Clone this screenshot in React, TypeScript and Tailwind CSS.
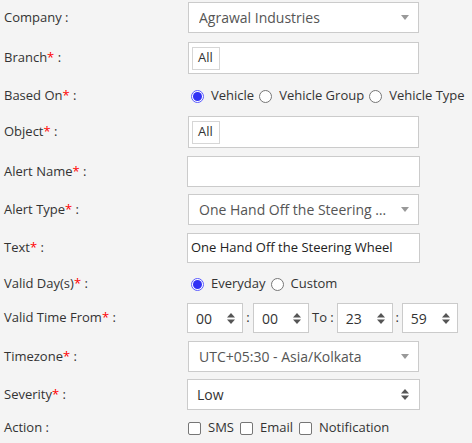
import React from "react";

const Req = () => <span className="text-[#ff0000]">*</span>;

function Label({ text, req }: { text: string; req?: boolean }) {
  return (
    <div className="w-[187px] shrink-0 pl-[4px] text-[13px] text-[#333]">
      {text}
      {req && <Req />} :
    </div>
  );
}

const Caret = () => (
  <svg width="8" height="5" viewBox="0 0 8 5" className="shrink-0">
    <path d="M0 0 L8 0 L4 5 Z" fill="#999" />
  </svg>
);

const Spinner = () => (
  <svg width="8" height="11" viewBox="0 0 8 11" className="shrink-0">
    <path d="M0 4.5 L8 4.5 L4 0 Z" fill="#555" />
    <path d="M0 6.5 L8 6.5 L4 11 Z" fill="#555" />
  </svg>
);

function Radio({ checked, className = "" }: { checked?: boolean; className?: string }) {
  return checked ? (
    <span className={"w-[13px] h-[13px] rounded-full border border-[#5a5aff] bg-white flex items-center justify-center shrink-0 " + className}>
      <span className="w-[9px] h-[9px] rounded-full bg-[#3131f5]" />
    </span>
  ) : (
    <span className={"block w-[13px] h-[13px] rounded-full border border-[#767676] bg-white shrink-0 " + className} />
  );
}

const Check = ({ className = "" }: { className?: string }) => (
  <span className={"block w-[13px] h-[13px] rounded-[2px] border border-[#767676] bg-white shrink-0 " + className} />
);

function SelectBox({ text }: { text: string }) {
  return (
    <div className="ml-[1px] w-[231px] h-[31px] bg-white border border-[#cbcbcb] flex items-center pl-[10px] pr-[9px]">
      <span className="flex-1 text-[14px] text-[#555] whitespace-nowrap overflow-hidden">{text}</span>
      <Caret />
    </div>
  );
}

function TagBox() {
  return (
    <div className="ml-[1px] w-[231px] h-[32px] bg-white border border-[#cbcbcb] flex items-center pl-[3px]">
      <span className="h-[23px] w-[28px] border border-[#d6d6d6] text-[13px] text-[#333] flex items-center pl-[5px]">All</span>
    </div>
  );
}

function TimeBox({ v }: { v: string }) {
  return (
    <div className="w-[56px] h-[30px] bg-white border border-[#cbcbcb] flex items-center pl-[8px] pr-[7px]">
      <span className="flex-1 text-[14px] text-[#333]">{v}</span>
      <Spinner />
    </div>
  );
}

export default function App() {
  return (
    <div
      className="w-[472px] h-[443px] bg-[#f4f4f4] overflow-hidden"
      style={{ fontFamily: '"Open Sans", "Noto Sans", sans-serif' }}
    >
      <div className="flex items-center mt-[2px] h-[31px]">
        <Label text="Company" />
        <SelectBox text="Agrawal Industries" />
      </div>
      <div className="flex items-center mt-[9px] h-[32px]">
        <Label text="Branch" req />
        <TagBox />
      </div>
      <div className="flex items-center mt-[12px] h-[20px] text-[13px] text-[#333]">
        <Label text="Based On" req />
        <div className="flex items-center pl-[4px]">
          <Radio checked />
          <span className="ml-[7px]">Vehicle</span>
          <Radio className="ml-[5px]" />
          <span className="ml-[7px]">Vehicle Group</span>
          <Radio className="ml-[5px]" />
          <span className="ml-[7px]">Vehicle Type</span>
        </div>
      </div>
      <div className="flex items-center mt-[10px] h-[32px]">
        <Label text="Object" req />
        <TagBox />
      </div>
      <div className="flex items-center mt-[8px] h-[31px]">
        <Label text="Alert Name" req />
        <div className="w-[233px] h-[31px] bg-white border border-[#cbcbcb]" />
      </div>
      <div className="flex items-center mt-[7px] h-[31px]">
        <Label text="Alert Type" req />
        <SelectBox text="One Hand Off the Steering …" />
      </div>
      <div className="flex items-center mt-[8px] h-[30px]">
        <Label text="Text" req />
        <div className="w-[233px] h-[30px] bg-white border border-[#cbcbcb] flex items-center pl-[3px] text-[13px] text-[#222] whitespace-nowrap">
          One Hand Off the Steering Wheel
        </div>
      </div>
      <div className="flex items-center mt-[11px] h-[20px] text-[13px] text-[#333]">
        <Label text="Valid Day(s)" req />
        <div className="flex items-center pl-[4px]">
          <Radio checked />
          <span className="ml-[7px]">Everyday</span>
          <Radio className="ml-[5px]" />
          <span className="ml-[7px]">Custom</span>
        </div>
      </div>
      <div className="flex items-center mt-[9px] h-[30px] text-[13px] text-[#333]">
        <Label text="Valid Time From" req />
        <TimeBox v="00" />
        <span className="w-[10px] text-center">:</span>
        <TimeBox v="00" />
        <span className="ml-[3px] mr-[3px]">To :</span>
        <TimeBox v="23" />
        <span className="w-[9px] text-center">:</span>
        <TimeBox v="59" />
      </div>
      <div className="flex items-center mt-[8px] h-[31px]">
        <Label text="Timezone" req />
        <SelectBox text="UTC+05:30 - Asia/Kolkata" />
      </div>
      <div className="flex items-center mt-[7px] h-[31px]">
        <Label text="Severity" req />
        <div className="w-[233px] h-[31px] bg-white border border-[#cbcbcb] flex items-center pl-[9px] pr-[10px]">
          <span className="flex-1 text-[14px] text-[#333]">Low</span>
          <Spinner />
        </div>
      </div>
      <div className="flex items-center mt-[8px] h-[20px] text-[13px] text-[#333]">
        <Label text="Action" />
        <div className="flex items-center pl-[1px]">
          <Check />
          <span className="ml-[7px]">SMS</span>
          <Check className="ml-[6px]" />
          <span className="ml-[7px]">Email</span>
          <Check className="ml-[6px]" />
          <span className="ml-[7px]">Notification</span>
        </div>
      </div>
    </div>
  );
}
